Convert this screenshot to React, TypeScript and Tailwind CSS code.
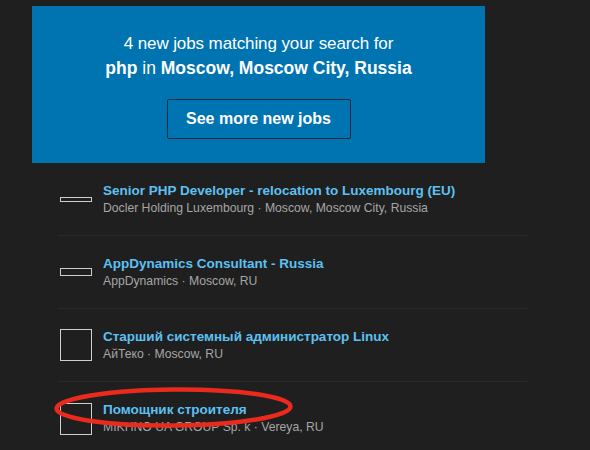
import React from "react";

const jobs = [
  { title: "Senior PHP Developer - relocation to Luxembourg (EU)", sub: "Docler Holding Luxembourg · Moscow, Moscow City, Russia", logo: "h-[5px]" },
  { title: "AppDynamics Consultant - Russia", sub: "AppDynamics · Moscow, RU", logo: "h-[8px]" },
  { title: "Старший системный администратор Linux", sub: "АйТеко · Moscow, RU", logo: "h-[32px]" },
  { title: "Помощник строителя", sub: "MIKHNO UA GROUP Sp. k · Vereya, RU", logo: "h-[32px]" },
];

export default function App() {
  return (
    <div className="relative w-[590px] h-[450px] overflow-hidden bg-[#1f1f1f]" style={{ fontFamily: '"Liberation Sans", Arial, sans-serif' }}>
      <div className="pt-[6px] pl-[32px]">
        <div className="w-[453px] h-[157px] bg-[#0073b1] flex flex-col items-center text-white">
          <div className="mt-[26px] text-[17px] leading-[24px] font-light tracking-[-0.1px]">4 new jobs matching your search for</div>
          <div className="text-[17.5px] leading-[24px]">
            <span className="font-bold">php</span> in <span className="font-bold">Moscow, Moscow City, Russia</span>
          </div>
          <div className="mt-[19px] w-[184px] h-[40px] border border-[#1b2a38] rounded-[2px] flex items-center justify-center text-[16px] font-bold">
            See more new jobs
          </div>
        </div>
      </div>
      <div className="ml-[58px] w-[469px]">
        {jobs.map((j, i) => (
          <div key={i} className={`h-[73px] flex items-center ${i < 3 ? "border-b border-[#2a2a2a]" : ""}`}>
            <div className="w-[32px] h-[32px] ml-[2px] flex items-center">
              <div className={`w-[32px] ${j.logo} border border-[#cfcfcf]`} />
            </div>
            <div className="ml-[11px] flex flex-col">
              <div className="text-[13.5px] leading-[18px] font-bold text-[#5cc1f2]">{j.title}</div>
              <div className="text-[12.2px] leading-[17px] text-[#a6a6a6]">{j.sub}</div>
            </div>
          </div>
        ))}
      </div>
      <svg className="absolute left-0 top-0" width="590" height="450" viewBox="0 0 590 450">
        <ellipse cx="173.5" cy="407.5" rx="117" ry="18" fill="none" stroke="#ea2a1c" strokeWidth="4.5" transform="rotate(-0.5 173.5 407.5)" />
      </svg>
    </div>
  );
}
